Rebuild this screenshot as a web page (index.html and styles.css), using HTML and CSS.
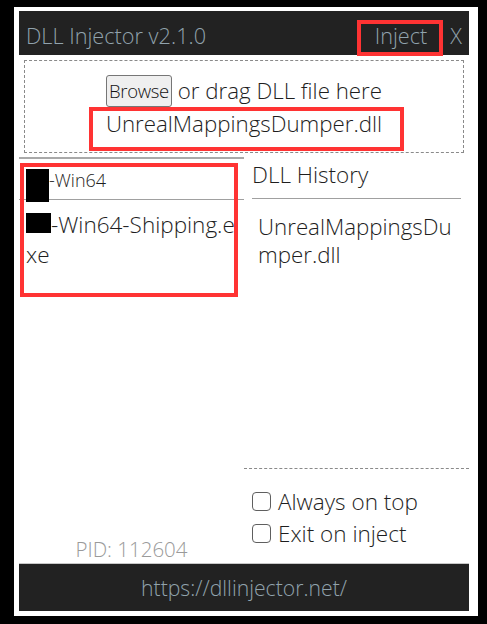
FILE: index.html
```html
<!DOCTYPE html>
<html lang="en">
<head>
<meta charset="utf-8">
<title>DLL Injector v2.1.0</title>
<link rel="stylesheet" href="styles.css">
</head>
<body>
<div class="window">
  <header class="titlebar">
    <span class="title">DLL Injector v2.1.0</span>
    <span class="inject">Inject</span>
    <span class="close">X</span>
  </header>
  <div class="dropzone">
    <div class="drop-line"><button class="browse" type="button">Browse</button> or drag DLL file here</div>
    <div class="filename">UnrealMappingsDumper.dll</div>
  </div>
  <div class="columns">
    <div class="procs">
      <div class="proc proc-window"><span class="redact redact-window"></span>-Win64</div>
      <div class="proc proc-exe"><span class="redact redact-exe"></span>-Win64-Shipping.exe</div>
      <div class="pid">PID: 112604</div>
    </div>
    <div class="side">
      <div class="history-title">DLL History</div>
      <div class="history">
        <div class="history-item">UnrealMappingsDumper.dll</div>
      </div>
      <div class="options">
        <label class="opt"><input type="checkbox"><span>Always on top</span></label>
        <label class="opt"><input type="checkbox"><span>Exit on inject</span></label>
      </div>
    </div>
  </div>
  <footer class="footer">https://dllinjector.net/</footer>
  <div class="mark mark-inject"></div>
  <div class="mark mark-file"></div>
  <div class="mark mark-procs"></div>
</div>
</body>
</html>
```

FILE: styles.css
```css
* {
  box-sizing: border-box;
}

html, body {
  margin: 0;
  padding: 0;
  background: #000;
  height: 624px;
  overflow: hidden;
}

body {
  font-family: "Open Sans", "Noto Sans", sans-serif;
  font-weight: 350;
  color: #1e1e1e;
}

.window {
  position: relative;
  width: 464px;
  height: 609px;
  margin: 7px 0 0 14px;
  padding: 4px 9px 5px 5px;
  background: #fff;
  display: flex;
  flex-direction: column;
}

.titlebar {
  height: 44px;
  flex: none;
  display: flex;
  align-items: center;
  padding: 4px 7px 0 7px;
  background: #222;
  color: #91a3ad;
  font-size: 21.7px;
  font-weight: 300;
}

.title {
  flex: 1;
}

.inject {
  margin-right: 23px;
}

.dropzone {
  flex: none;
  height: 93px;
  margin: 5px 5px 0;
  padding-top: 13px;
  border: 1px dashed #8a8a8a;
  text-align: center;
  font-size: 22.3px;
  line-height: 33px;
}

.browse {
  font-family: inherit;
  font-weight: 350;
  font-size: 18.5px;
  letter-spacing: -0.3px;
  color: #111;
  height: 32px;
  padding: 0 2px;
  margin: 0;
  border: 1px solid #767676;
  border-radius: 3px;
  background: #efefef;
  vertical-align: 1px;
}

.columns {
  flex: 1;
  display: grid;
  grid-template-columns: 225px 225px;
  min-height: 0;
}

.procs {
  margin-top: 4px;
  border-top: 2px solid #a9a9a9;
  display: flex;
  flex-direction: column;
}

.proc {
  padding: 0 8px 0 7px;
  word-break: break-all;
}

.proc-window {
  padding-top: 2px;
  height: 41px;
  font-size: 18px;
  line-height: 38px;
  border-bottom: 1px solid #a0a0a0;
}

.proc-exe {
  padding-top: 10px;
  font-size: 22.5px;
  line-height: 30px;
}

.redact {
  display: inline-block;
  background: #000;
}

.redact-window {
  width: 23px;
  height: 33px;
  vertical-align: top;
  position: relative;
  top: 8px;
}

.redact-exe {
  width: 25px;
  height: 20px;
  vertical-align: baseline;
}

.pid {
  margin-top: auto;
  text-align: center;
  font-size: 20.5px;
  line-height: 27px;
  color: #9a9a9a;
}

.side {
  display: flex;
  flex-direction: column;
}

.history-title {
  margin: 0 8px;
  padding: 8px 0 9px;
  font-size: 22.5px;
  line-height: 28px;
  border-bottom: 1px solid #a0a0a0;
}

.history {
  flex: 1;
}

.history-item {
  margin: 0 9px 0 14px;
  padding-top: 14px;
  font-size: 22.3px;
  line-height: 28px;
  word-break: break-all;
}

.options {
  border-top: 1px dashed #8a8a8a;
  padding: 16px 0 14px 8px;
}

.opt {
  display: flex;
  align-items: center;
  height: 32px;
  font-size: 22.5px;
}

.opt input {
  appearance: none;
  -webkit-appearance: none;
  width: 19px;
  height: 19px;
  margin: 0 7px 0 0;
  border: 1.5px solid #5f5f5f;
  border-radius: 4px;
  background: #fff;
}

.footer {
  flex: none;
  height: 48px;
  border-top: 1px solid #c8c8c8;
  background: #222;
  color: #91a3ad;
  font-size: 21.2px;
  font-weight: 300;
  display: flex;
  align-items: center;
  justify-content: center;
}

.mark {
  position: absolute;
  border: 4px solid #f33;
}

.mark-inject {
  left: 343px;
  top: 13px;
  width: 86px;
  height: 36px;
}

.mark-file {
  left: 75px;
  top: 100px;
  width: 315px;
  height: 44px;
}

.mark-procs {
  left: 6px;
  top: 156px;
  width: 218px;
  height: 134px;
}
```
